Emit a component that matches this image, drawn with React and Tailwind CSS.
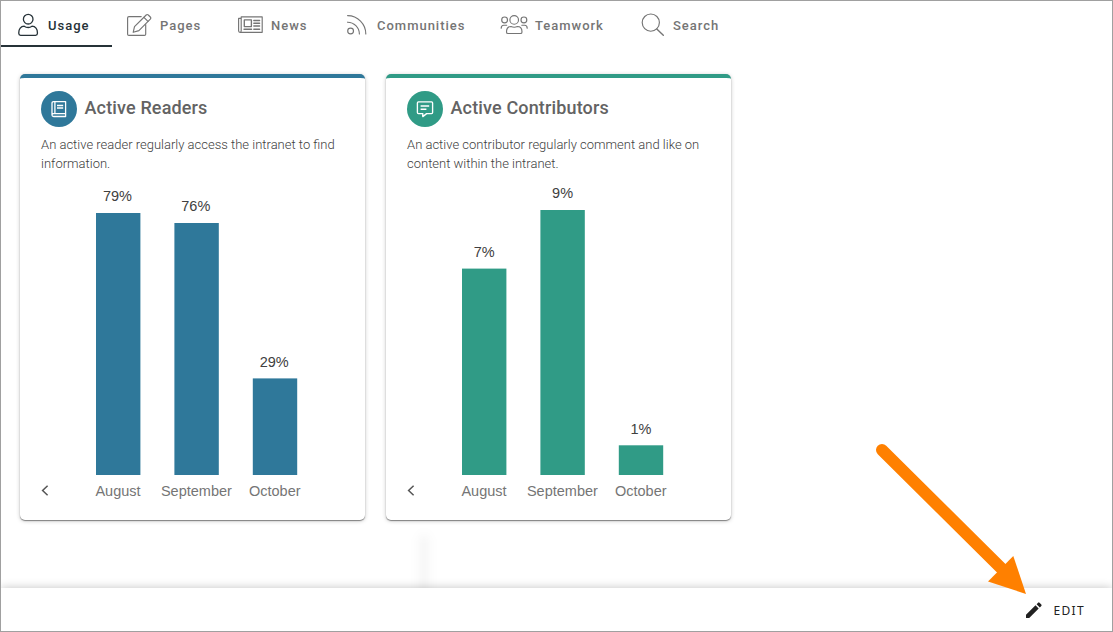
const iconProps = {
  fill: "none",
  stroke: "currentColor",
  strokeWidth: 1.15,
  strokeLinejoin: "round",
  strokeLinecap: "round",
  className: "block shrink-0",
};

function UserIcon() {
  return (
    <svg width="24" height="24" viewBox="0 0 24 24" {...iconProps} strokeWidth="1.3">
      <circle cx="12.2" cy="6.2" r="4.8" />
      <path d="M8.2 13.2C4.7 13.2 2.8 16.4 2.8 19.6V20.6Q2.8 22.4 4.6 22.4H19.6Q21.4 22.4 21.4 20.6V19.6C21.4 16.4 19.6 13.2 16 13.2C14.6 14.2 13.4 14.5 12.2 14.5C10.9 14.5 9.6 14.2 8.2 13.2Z" />
    </svg>
  );
}

function PagesIcon() {
  return (
    <svg width="26" height="24" viewBox="0 0 26 24" {...iconProps}>
      <path d="M15.2 3.6H2.9Q1.6 3.6 1.6 4.9V21.2Q1.6 22.4 2.9 22.4H18.4Q19.7 22.4 19.7 21.2V11.6" />
      <path d="M7.2 19.3L8.5 13.6L20.2 2Q21.2 1 22.3 2L24.3 4Q25.3 5 24.3 6.1L12.9 17.6Z" />
      <path d="M17.9 4.3L22 8.4" />
    </svg>
  );
}

function NewsIcon() {
  return (
    <svg width="27" height="24" viewBox="0 0 27 24" {...iconProps}>
      <path d="M5.2 3.9H25.2V19.3H3Q1.6 19.3 1.6 17.8V5.4H4.2V17.8Q4.2 19.3 3 19.3M4.2 5.4V3.9H5.2" />
      <path d="M7.3 6.9H14.4V13.6H7.3ZM16.8 7.5H22.6M16.8 10.2H22.6M16.8 13H22.6M7 16.2H14.6M16.8 16.2H22.6" strokeWidth="1.35" />
    </svg>
  );
}

function FeedIcon() {
  return (
    <svg width="24" height="24" viewBox="0 0 24 24" {...iconProps}>
      <circle cx="4.6" cy="18" r="2.9" />
      <path d="M1.6 9.2A12 12 0 0 1 13.4 21M1.6 2.6A18.3 18.3 0 0 1 19.8 21" />
    </svg>
  );
}

function TeamIcon() {
  return (
    <svg width="28" height="24" viewBox="0 0 28 24" {...iconProps}>
      <circle cx="14.2" cy="6.9" r="4.3" />
      <circle cx="4.6" cy="6.9" r="2.9" />
      <circle cx="23.9" cy="6.9" r="2.9" />
      <path d="M11 13.5C8.1 13.5 6.5 16 6.5 18.9Q6.5 20.5 8 20.5H20.4Q22 20.5 22 18.9C22 16 20.4 13.5 17.4 13.5Q14.2 15 11 13.5Z" />
      <path d="M1.2 15.2C1.2 12.9 2.4 12.2 3.8 12.2H6.7M27.2 15.2C27.2 12.9 26 12.2 24.6 12.2H21.8" />
    </svg>
  );
}

function SearchIcon() {
  return (
    <svg width="24" height="24" viewBox="0 0 24 24" {...iconProps}>
      <circle cx="9.8" cy="9.6" r="8.6" />
      <path d="M15.8 15.9L22.3 22.2" strokeWidth="1.4" />
    </svg>
  );
}

const tabs = [
  { label: "Usage", Icon: UserIcon, style: "w-[111px] pl-[15px] gap-2 border-[#263238] text-[#263238]" },
  { label: "Pages", Icon: PagesIcon, style: "w-[110px] pl-[14px] gap-2 border-transparent text-[#757575]" },
  { label: "News", Icon: NewsIcon, style: "w-[109px] pl-[15px] gap-[7px] border-transparent text-[#757575]" },
  { label: "Communities", Icon: FeedIcon, style: "w-[154px] pl-[15px] gap-[7px] border-transparent text-[#757575]" },
  { label: "Teamwork", Icon: TeamIcon, style: "w-[141px] pl-[15px] gap-[7px] border-transparent text-[#757575]" },
  { label: "Search", Icon: SearchIcon, style: "w-[110px] pl-[15px] gap-2 border-transparent text-[#757575]" },
];

function BookIcon() {
  return (
    <svg width="18" height="18" viewBox="0 0 18 18" fill="none" stroke="#fff" strokeWidth="1.3" strokeLinejoin="round">
      <path d="M15.6 13.6V1.6H3.6Q2 1.6 2 3.2V15Q2 16.5 3.6 16.5H15.6V13.6H3.6Q2 13.6 2 15M4.9 1.6V13.6M7 5.5H13.2M7 8H13.2" />
    </svg>
  );
}

function CommentIcon() {
  return (
    <svg width="18" height="18" viewBox="0 0 18 18" fill="none" stroke="#fff" strokeWidth="1.35" strokeLinejoin="round">
      <path d="M2.4 1.9H15.6Q16.6 1.9 16.6 2.9V12.6Q16.6 13.6 15.6 13.6H10.6L6.8 16.6V13.6H2.4Q1.4 13.6 1.4 12.6V2.9Q1.4 1.9 2.4 1.9ZM4.6 6H13.2M4.6 9.2H10.4" />
    </svg>
  );
}

const BASE = 302;

function BarChart({ data, color }) {
  return (
    <svg width="345" height="347" viewBox="0 0 345 347" className="block font-['Liberation_Sans',sans-serif] text-[14.5px]">
      {data.map((d, i) => {
        const x = 76 + i * 78.4;
        return (
          <g key={d.month} textAnchor="middle">
            <rect x={x} y={BASE - d.height} width="44.4" height={d.height} fill={color} />
            <text x={x + (d.value.length === 2 ? 22.2 : 21.4)} y={Math.ceil(BASE - d.height) - 12} fill="#404040">{d.value}</text>
            <text x={x + 22} y="323" fill="#757575">{d.month}</text>
          </g>
        );
      })}
      <path d="M27.6 312.8L22.6 317.5L27.6 322.2" fill="none" stroke="#555" strokeWidth="1.5" />
    </svg>
  );
}

function Card({ title, text, accent, icon, data, color }) {
  return (
    <section className={"h-[446px] w-[345px] overflow-hidden rounded-[5px] border-t-4 bg-white shadow-[0_1px_1px_rgba(0,0,0,0.42),0_1px_4px_rgba(0,0,0,0.22)] " + accent.border}>
      <div className="flex gap-[7.5px] pt-[13px] pl-[21px]">
        <div className={"flex h-9 w-9 items-center justify-center rounded-full " + accent.bg}>{icon}</div>
        <h2 className="h-9 text-lg leading-[33px] font-medium tracking-[0.15px] text-[#636363]">{title}</h2>
      </div>
      <p className="mt-2 h-[38px] pl-[21px] text-[13px] leading-[19px] font-light whitespace-pre-line text-[#404040]">{text}</p>
      <BarChart data={data} color={color} />
    </section>
  );
}

export default function App() {
  return (
    <div className="relative flex h-[632px] w-[1113px] flex-col overflow-hidden border border-[#a0a0a0] bg-white font-['Roboto',sans-serif]">
      <nav className="flex h-[46px]">
        {tabs.map(({ label, Icon, style }) => (
          <div key={label} className={"flex items-center border-b-2 pt-[3px] " + style}>
            <Icon />
            <span className="pt-0.5 text-[13px] leading-5 font-medium tracking-[0.98px]">{label}</span>
          </div>
        ))}
      </nav>

      <main className="flex flex-1 gap-[21px] pt-[27px] pl-[19px]">
        <Card
          title="Active Readers"
          text={"An active reader regularly access the intranet to find\ninformation."}
          accent={{ border: "border-[#2f789a]", bg: "bg-[#2f789a]" }}
          color="#2f789a"
          icon={<BookIcon />}
          data={[
            { month: "August", value: "79%", height: 262 },
            { month: "September", value: "76%", height: 252 },
            { month: "October", value: "29%", height: 96.6 },
          ]}
        />
        <Card
          title="Active Contributors"
          text={"An active contributor regularly comment and like on\ncontent within the intranet."}
          accent={{ border: "border-[#309b86]", bg: "bg-[#309b86]" }}
          color="#309b86"
          icon={<CommentIcon />}
          data={[
            { month: "August", value: "7%", height: 206.4 },
            { month: "September", value: "9%", height: 265 },
            { month: "October", value: "1%", height: 29.7 },
          ]}
        />
      </main>

      <div className="absolute top-[536px] left-[421px] h-[60px] w-[4px] bg-black/5 shadow-[0_0_9px_3px_rgba(0,0,0,0.03)] blur-[4px]" />

      <footer className="relative flex h-[43px] items-center justify-end gap-[9px] bg-white pr-[27px] text-[#212121] shadow-[0_0_9px_rgba(0,0,0,0.24)]">
        <svg width="20" height="20" viewBox="0 0 20 20" fill="currentColor">
          <path d="M2 14.8V18H5.2L14.7 8.5L11.5 5.3ZM17.3 5.9Q18 5.2 17.3 4.5L15.5 2.7Q14.8 2 14.1 2.7L12.6 4.2L15.8 7.4Z" />
        </svg>
        <span className="pt-0.5 font-['Noto_Sans',sans-serif] text-xs tracking-[1.35px]">EDIT</span>
      </footer>

      <svg width="156" height="156" viewBox="872 440 156 156" className="pointer-events-none absolute top-[439px] left-[871px]" fill="#ff8000">
        <path d="M882 450L1003 570" stroke="#ff8000" strokeWidth="12" strokeLinecap="round" />
        <path d="M1013.3 556L1026 594L988 581.5Z" />
      </svg>
    </div>
  );
}
